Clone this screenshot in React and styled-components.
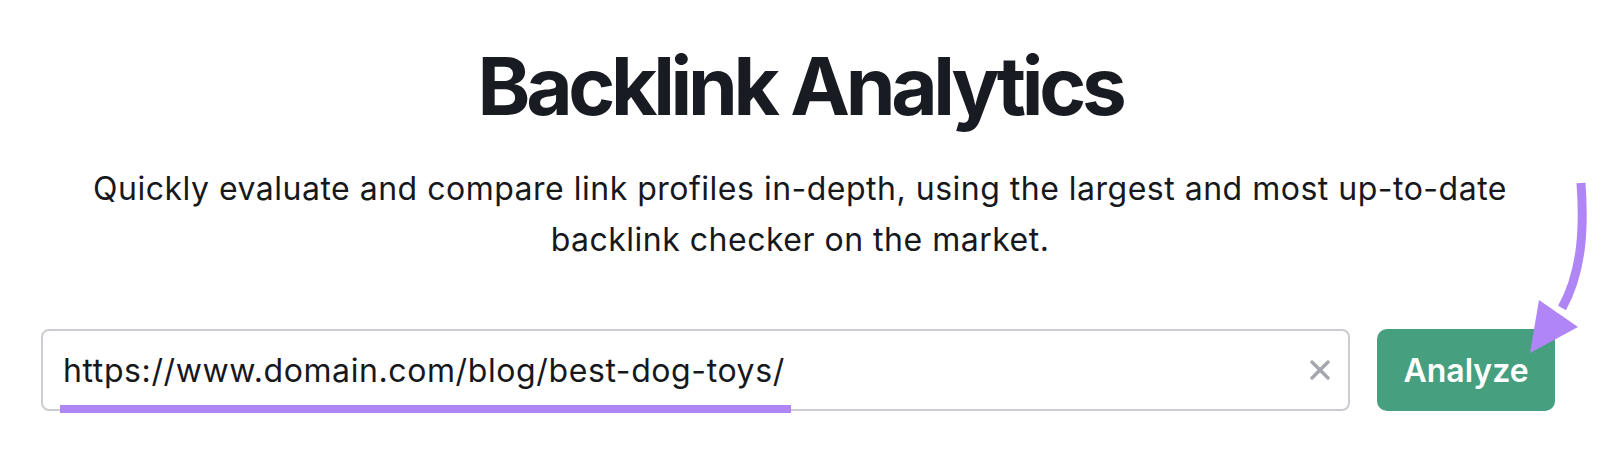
import React from 'react'
import styled, { createGlobalStyle } from 'styled-components'

const GlobalStyle = createGlobalStyle`
  body {
    margin: 0;
    background: #ffffff;
    font-family: Inter, "Liberation Sans", sans-serif;
    color: #171a22;
  }
`

const Page = styled.div`
  position: relative;
  width: 1600px;
  height: 472px;
  overflow: hidden;
  padding-top: 36px;
  box-sizing: border-box;
`

const Title = styled.h1`
  margin: 0;
  text-align: center;
  font-size: 80px;
  line-height: 100px;
  font-weight: 700;
  letter-spacing: -4.3px;
  color: #191b22;
`

const Subtitle = styled.p`
  margin: 27px auto 0;
  max-width: 1460px;
  text-align: center;
  font-size: 32px;
  line-height: 51px;
  font-weight: 400;
  letter-spacing: 0.5px;
  color: #17181c;
`

const SearchRow = styled.div`
  display: flex;
  gap: 27px;
  margin-top: 64px;
  padding: 0 45px 0 41px;
`

const InputBox = styled.div`
  position: relative;
  flex: 1;
  height: 82px;
  display: flex;
  align-items: center;
  padding: 0 20px;
  box-sizing: border-box;
  border: 2px solid #cbcdd3;
  border-radius: 8px;
`

const UrlText = styled.span`
  flex: 1;
  font-size: 32px;
  letter-spacing: 0.6px;
  color: #17181c;
`

const ClearIcon = styled.svg`
  width: 22px;
  height: 22px;
  margin-right: -3px;
`

const Underline = styled.div`
  position: absolute;
  left: 17px;
  bottom: -4px;
  width: 731px;
  height: 8px;
  background: #b085f5;
`

const AnalyzeButton = styled.button`
  width: 178px;
  height: 82px;
  border: none;
  border-radius: 10px;
  background: #469f7f;
  color: #ffffff;
  font-family: Inter, "Liberation Sans", sans-serif;
  font-size: 32px;
  font-weight: 600;
`

const Arrow = styled.svg`
  position: absolute;
  left: 1520px;
  top: 175px;
  width: 80px;
  height: 190px;
`

const App = () => {
  return (
    <Page>
      <GlobalStyle />
      <Title>Backlink Analytics</Title>
      <Subtitle>
        Quickly evaluate and compare link profiles in-depth, using the largest and most up-to-date backlink checker on the market.
      </Subtitle>
      <SearchRow>
        <InputBox>
          <UrlText>https://www.domain.com/blog/best-dog-toys/</UrlText>
          <ClearIcon viewBox="0 0 22 22">
            <path d="M3 3 L19 19 M19 3 L3 19" stroke="#a5a7ae" strokeWidth="3.5" strokeLinecap="round" />
          </ClearIcon>
          <Underline />
        </InputBox>
        <AnalyzeButton>Analyze</AnalyzeButton>
      </SearchRow>
      <Arrow viewBox="0 0 80 190">
        <path d="M61 8 C64 50 63 95 42 133" fill="none" stroke="#b085f5" strokeWidth="9" />
        <polygon points="19,125 58,152 10,178" fill="#b085f5" />
      </Arrow>
    </Page>
  )
}

export default App
